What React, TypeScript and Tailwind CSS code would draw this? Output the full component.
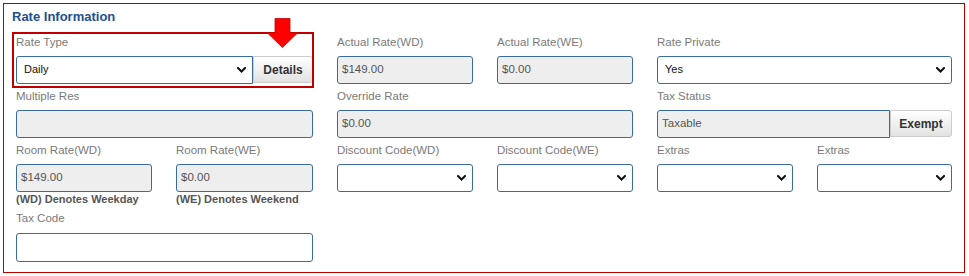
import React from 'react';

function Chevron() {
  return (
    <svg className="w-[9px] h-[6px]" viewBox="0 0 9 6" fill="none">
      <path d="M1 1l3.5 3.5L8 1" stroke="#111" strokeWidth={2} strokeLinecap="square" />
    </svg>
  );
}

function Label({ children, tall }: { children: React.ReactNode; tall?: boolean }) {
  return (
    <div className={`${tall ? 'h-[23.5px]' : 'h-[22px]'} text-[11.5px] leading-[16px] text-[#7a7a7a]`}>
      {children}
    </div>
  );
}

function ReadInput({ value, className = '' }: { value?: string; className?: string }) {
  return (
    <div
      className={`h-[28px] flex items-center pl-[4px] bg-[#eeeeee] border border-[#3a6b9e] rounded-[3px] text-[11.5px] text-[#555] ${className}`}
    >
      {value}
    </div>
  );
}

function Select({ value, className = '' }: { value?: string; className?: string }) {
  return (
    <div
      className={`h-[28px] flex items-center justify-between pl-[7px] pr-[6px] bg-white border border-[#3a6b9e] rounded-[3px] text-[11px] text-[#111] ${className}`}
    >
      <span>{value}</span>
      <Chevron />
    </div>
  );
}

function Field({ label, children, span2 }: { label: string; children: React.ReactNode; span2?: boolean }) {
  return (
    <div className={`px-3 ${span2 ? 'col-span-2' : ''}`}>
      <Label>{label}</Label>
      {children}
    </div>
  );
}

function GrayButton({ children, className = '' }: { children: React.ReactNode; className?: string }) {
  return (
    <div
      className={`h-[27px] flex items-center justify-center border border-[#cccccc] rounded-r-[3px] bg-gradient-to-b from-white to-[#e2e2e2] text-[12px] font-bold text-[#333] ${className}`}
    >
      {children}
    </div>
  );
}

export default function App() {
  return (
    <div className="w-[969px] h-[276px] bg-white pt-[3px] pl-[3px] font-['Liberation_Sans',Arial,sans-serif]">
      <div className="relative w-[962px] h-[270px] border border-[#c00000]">
        <div className="pl-2 pt-[5px] h-[29.5px] text-[13px] leading-[15px] font-bold text-[#1e4f91]">
          Rate Information
        </div>

        <div className="grid grid-cols-[160px_161px_160px_160px_160px_159px] gap-y-[4px]">
          {/* row 1 */}
          <Field label="Rate Type" span2>
            <div className="flex items-center">
              <Select value="Daily" className="w-[237px] rounded-r-none" />
              <GrayButton className="flex-1">Details</GrayButton>
            </div>
          </Field>
          <Field label="Actual Rate(WD)">
            <ReadInput value="$149.00" />
          </Field>
          <Field label="Actual Rate(WE)">
            <ReadInput value="$0.00" />
          </Field>
          <Field label="Rate Private" span2>
            <Select value="Yes" />
          </Field>

          {/* row 2 */}
          <Field label="Multiple Res" span2>
            <ReadInput />
          </Field>
          <Field label="Override Rate" span2>
            <ReadInput value="$0.00" />
          </Field>
          <Field label="Tax Status" span2>
            <div className="flex items-center">
              <ReadInput value="Taxable" className="w-[233px] rounded-r-none" />
              <GrayButton className="flex-1">Exempt</GrayButton>
            </div>
          </Field>

          {/* row 3 */}
          <Field label="Room Rate(WD)">
            <ReadInput value="$149.00" />
            <div className="text-[11px] leading-[14px] font-bold text-[#555]">(WD) Denotes Weekday</div>
          </Field>
          <Field label="Room Rate(WE)">
            <ReadInput value="$0.00" />
            <div className="text-[11px] leading-[14px] font-bold text-[#555]">(WE) Denotes Weekend</div>
          </Field>
          <Field label="Discount Code(WD)">
            <Select />
          </Field>
          <Field label="Discount Code(WE)">
            <Select />
          </Field>
          <Field label="Extras">
            <Select />
          </Field>
          <Field label="Extras">
            <Select />
          </Field>

          {/* row 4 */}
          <div className="px-3 col-span-2">
            <Label tall>Tax Code</Label>
            <div className="h-[28.5px] bg-white border border-[#3a6b9e] rounded-[3px]" />
          </div>
        </div>

        {/* annotation */}
        <div className="absolute left-[8px] top-[28px] w-[302px] h-[56px] border-2 border-[#c00000]" />
        <svg className="absolute left-[263px] top-[14px] w-[31px] h-[30px]" viewBox="0 0 31 30">
          <path d="M8 0.5H23V15H30.5L15.5 29.5L0.5 15H8Z" fill="#ff0000" stroke="#cc0000" strokeWidth={0.8} />
        </svg>
      </div>
    </div>
  );
}
